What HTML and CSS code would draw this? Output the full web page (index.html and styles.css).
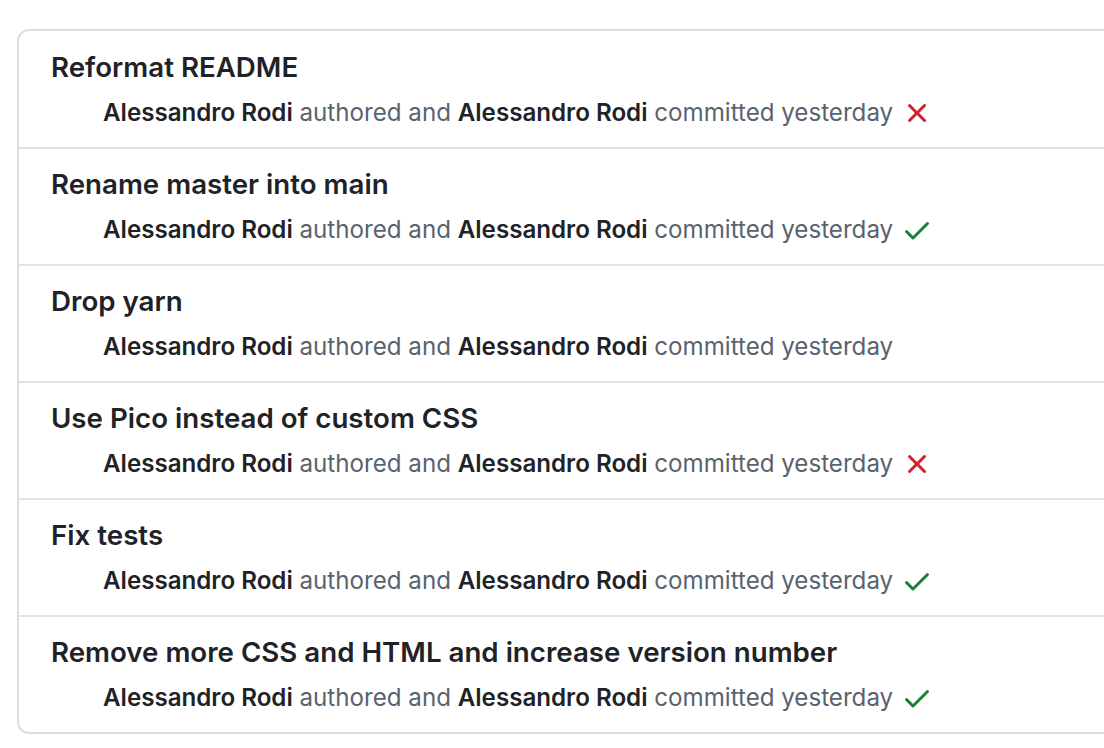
FILE: index.html
```html
<!DOCTYPE html>
<html>
<head>
<meta charset="utf-8">
<link rel="stylesheet" href="styles.css">
</head>
<body>
<div class="box">
  <div class="row">
    <div class="title">Reformat README</div>
    <div class="meta"><span class="text"><b>Alessandro Rodi</b> authored and <b>Alessandro Rodi</b> committed yesterday</span><svg class="icon fail" viewBox="0 0 16 16" width="32" height="32"><path d="M3.72 3.72a.75.75 0 0 1 1.06 0L8 6.94l3.22-3.22a.749.749 0 0 1 1.275.326.749.749 0 0 1-.215.734L9.06 8l3.220 3.22a.749.749 0 0 1-.326 1.275.749.749 0 0 1-.734-.215L8 9.06l-3.22 3.22a.751.751 0 0 1-1.042-.018.751.751 0 0 1-.018-1.042L6.94 8 3.72 4.78a.75.75 0 0 1 0-1.06Z"/></svg></div>
  </div>
  <div class="row">
    <div class="title">Rename master into main</div>
    <div class="meta"><span class="text"><b>Alessandro Rodi</b> authored and <b>Alessandro Rodi</b> committed yesterday</span><svg class="icon ok" viewBox="0 0 16 16" width="32" height="32"><path d="M13.780 4.22a.75.75 0 0 1 0 1.06l-7.25 7.25a.75.75 0 0 1-1.06 0L2.22 9.28a.751.751 0 0 1 .018-1.042.751.751 0 0 1 1.042-.018L6 10.94l6.72-6.72a.75.75 0 0 1 1.06 0Z"/></svg></div>
  </div>
  <div class="row">
    <div class="title">Drop yarn</div>
    <div class="meta"><span class="text"><b>Alessandro Rodi</b> authored and <b>Alessandro Rodi</b> committed yesterday</span></div>
  </div>
  <div class="row">
    <div class="title">Use Pico instead of custom CSS</div>
    <div class="meta"><span class="text"><b>Alessandro Rodi</b> authored and <b>Alessandro Rodi</b> committed yesterday</span><svg class="icon fail" viewBox="0 0 16 16" width="32" height="32"><path d="M3.72 3.72a.75.75 0 0 1 1.06 0L8 6.94l3.22-3.22a.749.749 0 0 1 1.275.326.749.749 0 0 1-.215.734L9.06 8l3.22 3.22a.749.749 0 0 1-.326 1.275.749.749 0 0 1-.734-.215L8 9.06l-3.22 3.22a.751.751 0 0 1-1.042-.018.751.751 0 0 1-.018-1.042L6.94 8 3.72 4.78a.75.75 0 0 1 0-1.06Z"/></svg></div>
  </div>
  <div class="row">
    <div class="title">Fix tests</div>
    <div class="meta"><span class="text"><b>Alessandro Rodi</b> authored and <b>Alessandro Rodi</b> committed yesterday</span><svg class="icon ok" viewBox="0 0 16 16" width="32" height="32"><path d="M13.78 4.22a.75.75 0 0 1 0 1.06l-7.25 7.25a.75.75 0 0 1-1.06 0L2.22 9.28a.751.751 0 0 1 .018-1.042.751.751 0 0 1 1.042-.018L6 10.94l6.72-6.72a.75.75 0 0 1 1.06 0Z"/></svg></div>
  </div>
  <div class="row">
    <div class="title">Remove more CSS and HTML and increase version number</div>
    <div class="meta"><span class="text"><b>Alessandro Rodi</b> authored and <b>Alessandro Rodi</b> committed yesterday</span><svg class="icon ok" viewBox="0 0 16 16" width="32" height="32"><path d="M13.78 4.22a.75.75 0 0 1 0 1.06l-7.25 7.25a.75.75 0 0 1-1.06 0L2.22 9.28a.751.751 0 0 1 .018-1.042.751.751 0 0 1 1.042-.018L6 10.94l6.72-6.72a.75.75 0 0 1 1.06 0Z"/></svg></div>
  </div>
</div>
</body>
</html>
```
FILE: styles.css
```css
html, body {
  margin: 0;
  overflow: hidden;
  background: #ffffff;
}
body {
  padding: 29px 0 0 17px;
  font-family: Inter, "Liberation Sans", sans-serif;
}
.box {
  width: 1140px;
  border: 2px solid #d8dee4;
  border-radius: 12px;
  box-sizing: border-box;
}
.row {
  height: 117px;
  box-sizing: border-box;
  padding: 18px 32px 0;
  border-top: 2px solid #dfe3e8;
}
.row:first-child {
  border-top: none;
  height: 116px;
  padding-top: 19px;
}
.title {
  font-size: 27.7px;
  font-weight: 600;
  color: #1f2328;
  line-height: 34px;
}
.meta {
  margin-top: 13px;
  padding-left: 52px;
  font-size: 24.15px;
  color: #59636e;
  line-height: 32px;
  display: flex;
  align-items: center;
}
.text {
  white-space: nowrap;
}
.meta b {
  font-weight: 600;
  color: #1f2328;
}
.icon {
  margin-left: 8px;
  flex: none;
}
.fail { fill: #cf222e; }
.ok { fill: #1a7f37; }
```
